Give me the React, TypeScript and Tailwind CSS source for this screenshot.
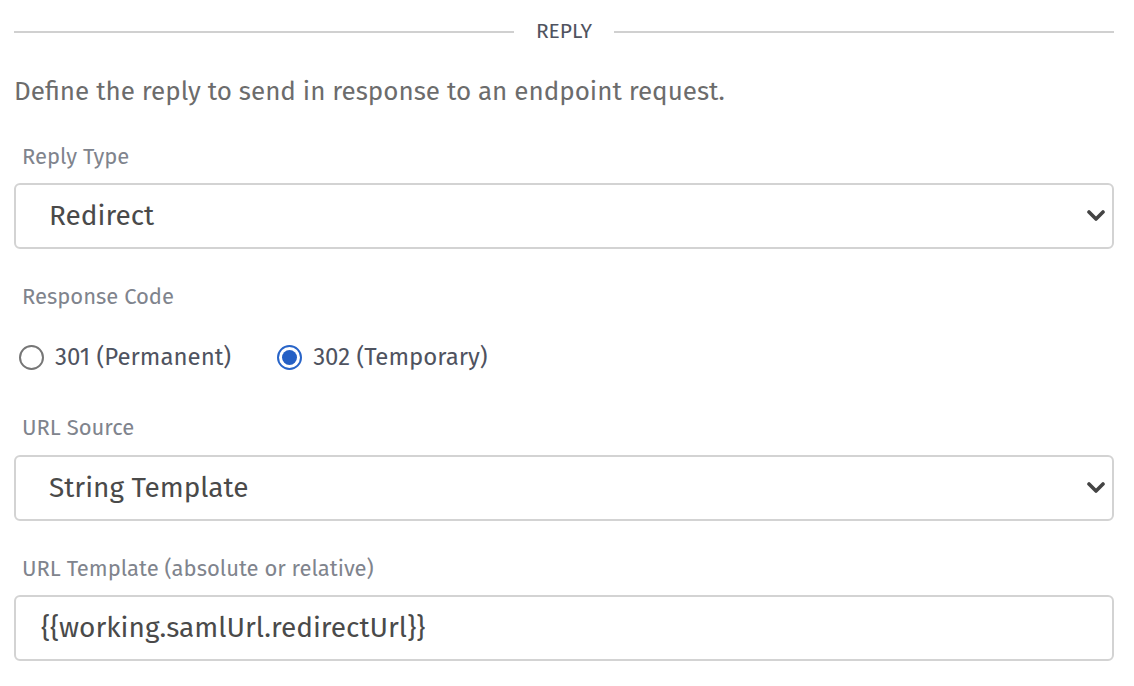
const font = { fontFamily: '"Fira Sans", "Noto Sans", sans-serif' };

function Label({ children }: { children: React.ReactNode }) {
  return <div className="pl-[8px] text-[22px] leading-[24px] text-[#80848d]">{children}</div>;
}

function Chevron() {
  return (
    <svg width="18" height="12" viewBox="0 0 18 12" fill="none">
      <polyline points="2,2 9,9 16,2" stroke="#444" strokeWidth="3.6" strokeLinecap="round" strokeLinejoin="round" />
    </svg>
  );
}

function SelectBox({ value }: { value: string }) {
  return (
    <div className="h-[66px] rounded-[6px] border-2 border-[#d3d3d3] bg-white flex items-center pl-[33px] pr-[7px]">
      <span className="flex-1 text-[28px] text-[#4a4a4a]">{value}</span>
      <Chevron />
    </div>
  );
}

function Radio({ label, checked }: { label: string; checked?: boolean }) {
  return (
    <label className="flex items-center gap-[11px] h-[30px]">
      <span
        className={
          checked
            ? 'w-[25px] h-[25px] rounded-full border-2 border-[#2864c8] flex items-center justify-center'
            : 'w-[25px] h-[25px] rounded-full border-2 border-[#767676]'
        }
      >
        {checked && <span className="w-[15px] h-[15px] rounded-full bg-[#2560c5]" />}
      </span>
      <span className="text-[24px] text-[#4f5360]">{label}</span>
    </label>
  );
}

export default function App() {
  return (
    <div className="w-[1134px] h-[686px] bg-white pl-[14px] pr-[20px] pt-[16px]" style={font}>
      <div className="flex items-center h-[32px]">
        <div className="flex-1 h-[2px] bg-[#d0d0d0]" />
        <span className="px-[22px] text-[21px] text-[#4f5360]">REPLY</span>
        <div className="flex-1 h-[2px] bg-[#d0d0d0]" />
      </div>
      <p className="mt-[28px] text-[26px] leading-[32px] text-[#6c6c6c]">
        Define the reply to send in response to an endpoint request.
      </p>

      <div className="mt-[37px]">
        <Label>Reply Type</Label>
        <div className="mt-[14px]">
          <SelectBox value="Redirect" />
        </div>
      </div>

      <div className="mt-[36px]">
        <Label>Response Code</Label>
        <div className="mt-[33px] pl-[5px] flex items-center gap-[46px]">
          <Radio label="301 (Permanent)" />
          <Radio label="302 (Temporary)" checked />
        </div>
      </div>

      <div className="mt-[44px]">
        <Label>URL Source</Label>
        <div className="mt-[15px]">
          <SelectBox value="String Template" />
        </div>
      </div>

      <div className="mt-[36px]">
        <Label>URL Template (absolute or relative)</Label>
        <div className="mt-[14px] h-[66px] rounded-[6px] border-2 border-[#d3d3d3] bg-white flex items-center pl-[25px]">
          <span className="text-[28px] text-[#4a4a4a]">{'{{working.samlUrl.redirectUrl}}'}</span>
        </div>
      </div>
    </div>
  );
}
